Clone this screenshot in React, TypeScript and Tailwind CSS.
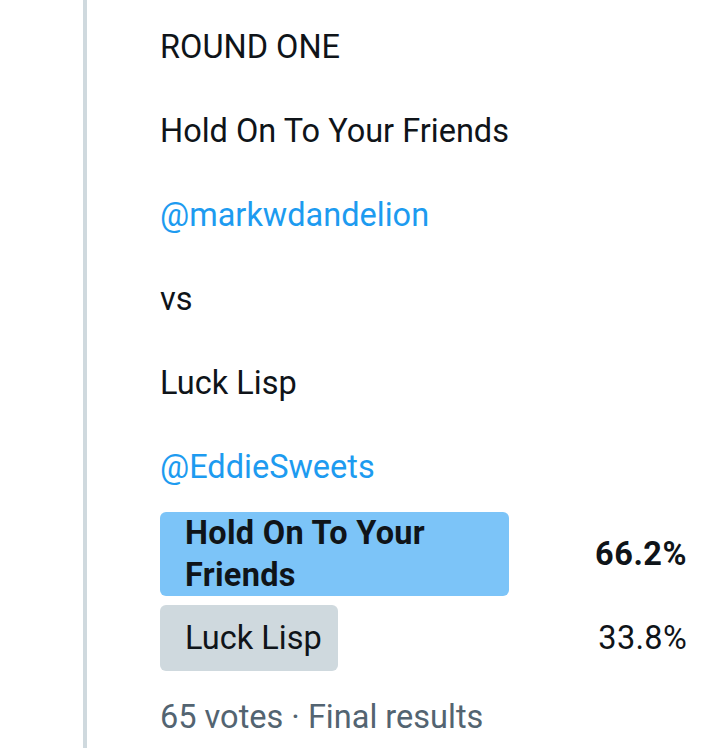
const lines: { text: string; link?: boolean }[] = [
  { text: "ROUND ONE" },
  { text: "Hold On To Your Friends" },
  { text: "@markwdandelion", link: true },
  { text: "vs" },
  { text: "Luck Lisp" },
  { text: "@EddieSweets", link: true },
];

const options = [
  { label: "Hold On To Your Friends", pct: 66.2, winner: true },
  { label: "Luck Lisp", pct: 33.8, winner: false },
];

export default function App() {
  return (
    <div
      className="flex h-[748px] w-[720px] overflow-hidden bg-white text-[#0f1419]"
      style={{ fontFamily: "Roboto, 'Noto Sans', sans-serif" }}
    >
      <div className="w-[83px] shrink-0" />
      <div className="w-[4px] shrink-0 bg-[#cfd9de]" />
      <div className="w-[527px] pl-[73px] pt-[26px]" style={{ boxSizing: "content-box" }}>
        <div className="flex flex-col gap-[42px] text-[32.5px] leading-[42px]">
          {lines.map((l, i) => (
            <div key={i} className={l.link ? "text-[#1d9bf0]" : ""}>
              {l.text}
            </div>
          ))}
        </div>

        {/* poll results */}
        <div className="mt-[24px] flex w-[527px] flex-col gap-[9px] text-[32.5px] leading-[42px]">
          {options.map((o) => (
            <div key={o.label} className="flex items-center justify-between">
              <div
                className={
                  "flex min-h-[66px] items-center rounded-[6px] pl-[25px] pr-3 " +
                  (o.winner ? "bg-[#7cc4f8] font-bold tracking-[0.3px]" : "bg-[#cfd9de]")
                }
                style={{ width: `${(o.pct / 100) * 527}px` }}
              >
                {o.label}
              </div>
              <div className={o.winner ? "font-bold tracking-[0.5px]" : "tracking-[0.3px]"}>
                {o.pct.toFixed(1)}%
              </div>
            </div>
          ))}
        </div>

        <div className="mt-[25px] text-[32.5px] leading-[42px] text-[#536471]">
          65 votes · Final results
        </div>
      </div>
    </div>
  );
}
